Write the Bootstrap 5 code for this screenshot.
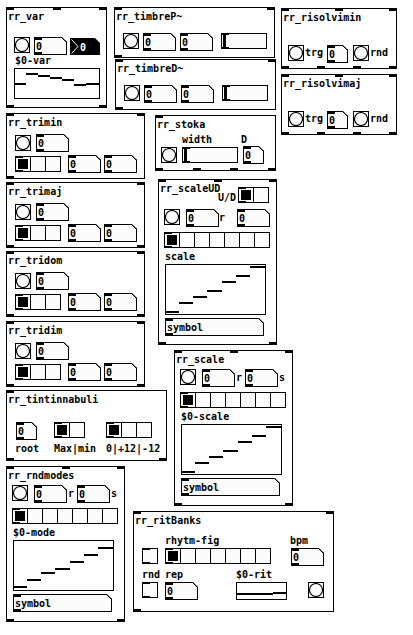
<!DOCTYPE html>
<html lang="en">
<head>
<meta charset="utf-8">
<meta name="viewport" content="width=device-width, initial-scale=1">
<title>rr_ patch</title>
<link href="https://cdn.jsdelivr.net/npm/bootstrap@5.3.0/dist/css/bootstrap.min.css" rel="stylesheet">
<style>
body, input, button { font: bold 10px/12px "DejaVu Sans Mono", monospace; color: #000; }
body { background: #fff; }

/* Modules on the free canvas */
.node { position: absolute; display: flex; flex-direction: column; border: 1px solid #000; background: #fff; }
.node h2 { font: inherit; margin: 0; padding: 1px 0 0 1px; white-space: nowrap; }
.ports { display: flex; justify-content: space-between; margin: -1px -1px 0; }
.ports.outs { margin: auto -1px -1px; }
.ports i { width: 8px; height: 3px; background: #000; }
#n-var { left: 6px; top: 7px; width: 101px; min-height: 101px; }
#n-tp { left: 114px; top: 7px; width: 161px; min-height: 51px; }
#n-td { left: 115px; top: 59px; width: 161px; min-height: 51px; }
#n-rmin { left: 281px; top: 8px; width: 116px; min-height: 61px; }
#n-rmaj { left: 281px; top: 74px; width: 116px; min-height: 61px; }
.tri { left: 6px; width: 139px; min-height: 66px; }
#n-tmin { top: 113px; }
#n-tmaj { top: 182px; }
#n-tdom { top: 251px; }
#n-tdim { top: 321px; }
#n-stoka { left: 155px; top: 115px; width: 121px; min-height: 56px; }
#n-ud { left: 158px; top: 179px; width: 119px; min-height: 166px; }
#n-scale { left: 174px; top: 350px; width: 119px; min-height: 156px; }
#n-tin { left: 6px; top: 390px; width: 161px; min-height: 71px; }
#n-rnd { left: 6px; top: 466px; width: 119px; min-height: 156px; }
#n-rit { left: 133px; top: 511px; width: 201px; min-height: 101px; }

/* Lines of controls */
.line { display: grid; align-items: start; justify-items: start; }
.cap { display: block; white-space: nowrap; line-height: 12px; }
.l-var { grid-template-columns: 20px 36px auto; padding: 14px 0 0 7px; }
.l-timbre { grid-template-columns: 20px 37px 41px auto; padding: 10px 0 0 8px; }
.l-ris { grid-template-columns: 17px 22px 26px 17px auto; padding: 21px 0 0 6px; }
.l-ris .cap { margin-top: 2px; }
.l-tri1 { grid-template-columns: 21px auto; padding: 5px 0 0 8px; align-items: center; }
.l-tri2 { grid-template-columns: 53px 36px auto; padding: 3px 0 0 8px; align-items: center; }
.l-stcap { grid-template-columns: 59px auto; padding: 3px 0 0 26px; }
.l-stoka { grid-template-columns: 21px 61px auto; padding-left: 5px; align-items: center; }
.l-udtop { grid-template-columns: 59px 20px auto; }
.l-udtop .cap { margin-top: 10px; }
.l-udtop .cells { margin-top: 5px; }
.l-ud { grid-template-columns: 22px 33px 18px auto; padding: 5px 0 0 5px; }
.l-scale { grid-template-columns: 22px 34px 9px 34px auto; padding: 3px 0 0 5px; }
.l-ud .cap, .l-scale .cap { margin-top: 3px; }
.l-tin { grid-template-columns: 38px 52px auto; padding: 16px 0 0 9px; }
.l-tincap { grid-template-columns: 39px 52px auto; padding: 3px 0 0 8px; }
.l-ritcap { grid-template-columns: 125px auto; padding: 8px 0 1px 31px; }
.l-rit { grid-template-columns: 23px 126px auto; padding-left: 8px; }
.l-rit2 { grid-template-columns: 23px 71px 72px auto; padding: 3px 0 0 8px; }
.l-rit2 .cap { margin-bottom: 1px; }
.l-rit2 .bang { margin-top: 13px; }
.stack { padding: 5px 0 0 5px; }
.stack .sub { padding: 3px 0 0 1px; }
.stack .plot { margin-bottom: 3px; }

/* Widgets */
.bang { display: block; width: 16px; height: 16px; padding: 0; border: 1px solid #000; background: #fcfcfc; }
.bang svg { display: block; }
.num { display: block; width: 33px; height: 18px; padding: 1px 0 0 1px; border: 1px solid #000; border-radius: 0; outline: 0;
  clip-path: polygon(0 0, calc(100% - 5px) 0, 100% 5px, 100% 100%, 0 100%);
  background:
    linear-gradient(#000, #000) 0 0 / 8px 3px no-repeat border-box,
    linear-gradient(#000, #000) 0 100% / 8px 3px no-repeat border-box,
    linear-gradient(to top right, transparent 42%, #000 42%) 100% 0 / 6px 6px no-repeat border-box,
    #fcfcfc; }
.num.short { width: 21px; }
.num.sym { width: 99px; }
.dark { position: relative; width: 30px; height: 17px; margin-top: 1px; }
.dark input { width: 100%; height: 100%; border: 0; outline: 0; padding: 2px 0 0 10px; background: #000; color: #fff; clip-path: polygon(0 0, calc(100% - 5px) 0, 100% 5px, 100% 100%, 0 100%); }
.dark svg { position: absolute; left: 0; top: 0; pointer-events: none; }
.cells { display: flex; border-right: 1px solid #000; position: relative; min-width: 0; }
.cells input, .tgl { appearance: none; display: block; margin: 0; width: 15px; height: 16px; border: 1px solid #000; border-right: 0; background: #fcfcfc; }
.cells input:checked { background: linear-gradient(#000, #000) 2px 2px / 10px 10px no-repeat #fcfcfc; }
.cells input:first-child, .tgl {
  background: linear-gradient(#000, #000) 0 0 / 8px 2px no-repeat border-box, linear-gradient(#000, #000) 0 100% / 8px 2px no-repeat border-box, #fcfcfc; }
.cells input:first-child:checked {
  background: linear-gradient(#000, #000) 0 0 / 8px 2px no-repeat border-box, linear-gradient(#000, #000) 0 100% / 8px 2px no-repeat border-box, linear-gradient(#000, #000) 2px 2px / 10px 10px no-repeat padding-box, #fcfcfc; }
.tgl { width: 16px; border-right: 1px solid #000; }
.slide { appearance: none; display: block; margin: 0; width: 46px; height: 16px; padding: 0 1px; border: 1px solid #000;
  background: linear-gradient(#000, #000) 0 0 / 8px 2px no-repeat border-box, linear-gradient(#000, #000) 0 100% / 8px 2px no-repeat border-box, #fcfcfc; }
.slide.wide { width: 56px; }
.slide::-webkit-slider-runnable-track { height: 14px; background: none; }
.slide::-webkit-slider-thumb { appearance: none; width: 3px; height: 14px; background: #000; border: 0; border-radius: 0; }
.plot { display: block; border: 1px solid #000; margin-top: 1px; fill: none; stroke: #000; stroke-width: 2px; }
.l-rit2 .plot { margin-top: 0; }
</style>
<script src="https://cdn.jsdelivr.net/npm/bootstrap@5.3.0/dist/js/bootstrap.bundle.min.js"></script>
</head>
<body>
<svg class="d-none" aria-hidden="true"><symbol id="ring" viewBox="0 0 14 14"><circle cx="7" cy="7" r="6.5" fill="none" stroke="#000" stroke-width="1.1"/></symbol></svg>
<main class="position-relative min-vh-100 overflow-hidden">

<section class="node" id="n-var">
  <div class="ports"><i></i><i></i><i></i></div>
  <h2>rr_var</h2>
  <div class="line l-var">
    <button class="bang" aria-label="bang"><svg width="14" height="14"><use href="#ring"/></svg></button>
    <input class="num" aria-label="value" value="0">
    <div class="dark"><input aria-label="output" value="0"><svg width="10" height="17" fill="none" stroke="#fff"><path d="M1.5 1.5L8 8.5L1.5 15.5"/></svg></div>
  </div>
  <span class="cap ps-2">$0-var</span>
  <svg class="plot ms-2" style="margin-left:7px!important" width="86" height="31" viewBox="1 1 84 29"><path d="M0 16H12M12 6H24M24 8H36M36 10H48M48 12H60M60 17H72M72 16H86"/></svg>
  <div class="ports outs"><i></i><i></i></div>
</section>

<section class="node" id="n-tp">
  <div class="ports"><i></i><i></i></div>
  <h2>rr_timbreP~</h2>
  <div class="line l-timbre">
    <button class="bang" aria-label="bang"><svg width="14" height="14"><use href="#ring"/></svg></button>
    <input class="num" aria-label="first" value="0">
    <input class="num" aria-label="second" value="0">
    <input class="slide" type="range" aria-label="level" value="0">
  </div>
  <div class="ports outs"><i></i></div>
</section>

<section class="node" id="n-td">
  <div class="ports"><i></i><i></i></div>
  <h2>rr_timbreD~</h2>
  <div class="line l-timbre">
    <button class="bang" aria-label="bang"><svg width="14" height="14"><use href="#ring"/></svg></button>
    <input class="num" aria-label="first" value="0">
    <input class="num" aria-label="second" value="0">
    <input class="slide" type="range" aria-label="level" value="0">
  </div>
  <div class="ports outs"><i></i></div>
</section>

<section class="node" id="n-rmin">
  <div class="ports"><i></i><i></i><i></i></div>
  <h2>rr_risolvimin</h2>
  <div class="line l-ris">
    <button class="bang" id="b1" aria-label="trg"><svg width="14" height="14"><use href="#ring"/></svg></button><label class="cap" for="b1">trg</label>
    <input class="num short" aria-label="value" value="0">
    <button class="bang" id="b2" aria-label="rnd"><svg width="14" height="14"><use href="#ring"/></svg></button><label class="cap" for="b2">rnd</label>
  </div>
  <div class="ports outs"><i></i><i></i><i></i><i></i></div>
</section>

<section class="node" id="n-rmaj">
  <div class="ports"><i></i><i></i><i></i></div>
  <h2>rr_risolvimaj</h2>
  <div class="line l-ris">
    <button class="bang" id="b3" aria-label="trg"><svg width="14" height="14"><use href="#ring"/></svg></button><label class="cap" for="b3">trg</label>
    <input class="num short" aria-label="value" value="0">
    <button class="bang" id="b4" aria-label="rnd"><svg width="14" height="14"><use href="#ring"/></svg></button><label class="cap" for="b4">rnd</label>
  </div>
  <div class="ports outs"><i></i><i></i><i></i><i></i></div>
</section>

<section class="node tri" id="n-tmin">
  <div class="ports"><i></i><i></i></div>
  <h2>rr_trimin</h2>
  <div class="line l-tri1">
    <button class="bang" aria-label="bang"><svg width="14" height="14"><use href="#ring"/></svg></button>
    <input class="num" aria-label="value" value="0">
  </div>
  <div class="line l-tri2">
    <div class="cells" role="radiogroup" aria-label="inversion"><input type="radio" name="r1" aria-label="0" checked><input type="radio" name="r1" aria-label="1"><input type="radio" name="r1" aria-label="2"></div>
    <input class="num" aria-label="first" value="0">
    <input class="num" aria-label="second" value="0">
  </div>
  <div class="ports outs"><i></i></div>
</section>

<section class="node tri" id="n-tmaj">
  <div class="ports"><i></i><i></i></div>
  <h2>rr_trimaj</h2>
  <div class="line l-tri1">
    <button class="bang" aria-label="bang"><svg width="14" height="14"><use href="#ring"/></svg></button>
    <input class="num" aria-label="value" value="0">
  </div>
  <div class="line l-tri2">
    <div class="cells" role="radiogroup" aria-label="inversion"><input type="radio" name="r2" aria-label="0" checked><input type="radio" name="r2" aria-label="1"><input type="radio" name="r2" aria-label="2"></div>
    <input class="num" aria-label="first" value="0">
    <input class="num" aria-label="second" value="0">
  </div>
  <div class="ports outs"><i></i><i></i></div>
</section>

<section class="node tri" id="n-tdom">
  <div class="ports"><i></i><i></i></div>
  <h2>rr_tridom</h2>
  <div class="line l-tri1">
    <button class="bang" aria-label="bang"><svg width="14" height="14"><use href="#ring"/></svg></button>
    <input class="num" aria-label="value" value="0">
  </div>
  <div class="line l-tri2">
    <div class="cells" role="radiogroup" aria-label="inversion"><input type="radio" name="r3" aria-label="0" checked><input type="radio" name="r3" aria-label="1"><input type="radio" name="r3" aria-label="2"></div>
    <input class="num" aria-label="first" value="0">
    <input class="num" aria-label="second" value="0">
  </div>
  <div class="ports outs"><i></i><i></i></div>
</section>

<section class="node tri" id="n-tdim">
  <div class="ports"><i></i><i></i></div>
  <h2>rr_tridim</h2>
  <div class="line l-tri1">
    <button class="bang" aria-label="bang"><svg width="14" height="14"><use href="#ring"/></svg></button>
    <input class="num" aria-label="value" value="0">
  </div>
  <div class="line l-tri2">
    <div class="cells" role="radiogroup" aria-label="inversion"><input type="radio" name="r4" aria-label="0" checked><input type="radio" name="r4" aria-label="1"><input type="radio" name="r4" aria-label="2"></div>
    <input class="num" aria-label="first" value="0">
    <input class="num" aria-label="second" value="0">
  </div>
  <div class="ports outs"><i></i><i></i></div>
</section>

<section class="node" id="n-stoka">
  <div class="ports"><i></i></div>
  <h2>rr_stoka</h2>
  <div class="line l-stcap"><label class="cap" for="sw">width</label><label class="cap" for="sd">D</label></div>
  <div class="line l-stoka">
    <button class="bang" aria-label="bang"><svg width="14" height="14"><use href="#ring"/></svg></button>
    <input class="slide wide" type="range" id="sw" value="0">
    <input class="num short" id="sd" value="0">
  </div>
  <div class="ports outs"><i></i><i></i><i></i><i></i></div>
</section>

<section class="node" id="n-ud">
  <div class="ports"><i></i><i></i><i></i></div>
  <div class="line l-udtop">
    <h2>rr_scaleUD</h2><span class="cap" id="udl">U/D</span>
    <div class="cells" role="radiogroup" aria-labelledby="udl"><input type="radio" name="r5" aria-label="U" checked><input type="radio" name="r5" aria-label="D"></div>
  </div>
  <div class="line l-ud">
    <button class="bang" aria-label="bang"><svg width="14" height="14"><use href="#ring"/></svg></button>
    <input class="num" id="ur" value="0"><label class="cap" for="ur">r</label>
    <input class="num" aria-label="value" value="0">
  </div>
  <div class="stack">
    <div class="d-flex"><div class="cells" role="radiogroup" aria-label="scale"><input type="radio" name="r6" aria-label="0" checked><input type="radio" name="r6" aria-label="1"><input type="radio" name="r6" aria-label="2"><input type="radio" name="r6" aria-label="3"><input type="radio" name="r6" aria-label="4"><input type="radio" name="r6" aria-label="5"><input type="radio" name="r6" aria-label="6"></div></div>
    <div class="sub">
      <label class="cap" for="us">scale</label>
      <svg class="plot" width="101" height="51" viewBox="1 1 99 49"><path d="M0 48H14M14 39H28M28 33H42M42 27H57M57 18H71M71 12H85M85 3H101"/></svg>
      <input class="num sym" id="us" value="symbol">
    </div>
  </div>
  <div class="ports outs"><i></i><i></i></div>
</section>

<section class="node" id="n-scale">
  <div class="ports"><i></i><i></i><i></i></div>
  <h2>rr_scale</h2>
  <div class="line l-scale">
    <button class="bang" aria-label="bang"><svg width="14" height="14"><use href="#ring"/></svg></button>
    <input class="num" id="cr" value="0"><label class="cap" for="cr">r</label>
    <input class="num" id="cs" value="0"><label class="cap" for="cs">s</label>
  </div>
  <div class="stack">
    <div class="d-flex"><div class="cells" role="radiogroup" aria-label="scale"><input type="radio" name="r7" aria-label="0" checked><input type="radio" name="r7" aria-label="1"><input type="radio" name="r7" aria-label="2"><input type="radio" name="r7" aria-label="3"><input type="radio" name="r7" aria-label="4"><input type="radio" name="r7" aria-label="5"><input type="radio" name="r7" aria-label="6"></div></div>
    <div class="sub">
      <label class="cap" for="cy">$0-scale</label>
      <svg class="plot" width="101" height="51" viewBox="1 1 99 49"><path d="M0 48H14M14 39H28M28 33H42M42 27H57M57 18H71M71 12H85M85 3H101"/></svg>
      <input class="num sym" id="cy" value="symbol">
    </div>
  </div>
  <div class="ports outs"><i></i><i></i></div>
</section>

<section class="node" id="n-tin">
  <div class="ports"><i></i></div>
  <h2>rr_tintinnabuli</h2>
  <div class="line l-tin">
    <input class="num short" id="tr" value="0">
    <div class="cells" role="radiogroup" aria-labelledby="tm"><input type="radio" name="r8" aria-label="Max" checked><input type="radio" name="r8" aria-label="min"></div>
    <div class="cells" role="radiogroup" aria-labelledby="to"><input type="radio" name="r9" aria-label="0" checked><input type="radio" name="r9" aria-label="+12"><input type="radio" name="r9" aria-label="-12"></div>
  </div>
  <div class="line l-tincap"><label class="cap" for="tr">root</label><span class="cap" id="tm">Max|min</span><span class="cap" id="to">0|+12|-12</span></div>
  <div class="ports outs"><i></i><i></i></div>
</section>

<section class="node" id="n-rnd">
  <div class="ports"><i></i><i></i><i></i></div>
  <h2>rr_rndmodes</h2>
  <div class="line l-scale">
    <button class="bang" aria-label="bang"><svg width="14" height="14"><use href="#ring"/></svg></button>
    <input class="num" id="mr" value="0"><label class="cap" for="mr">r</label>
    <input class="num" id="ms" value="0"><label class="cap" for="ms">s</label>
  </div>
  <div class="stack">
    <div class="d-flex"><div class="cells" role="radiogroup" aria-label="mode"><input type="radio" name="r10" aria-label="0" checked><input type="radio" name="r10" aria-label="1"><input type="radio" name="r10" aria-label="2"><input type="radio" name="r10" aria-label="3"><input type="radio" name="r10" aria-label="4"><input type="radio" name="r10" aria-label="5"><input type="radio" name="r10" aria-label="6"></div></div>
    <div class="sub">
      <label class="cap" for="my">$0-mode</label>
      <svg class="plot" width="101" height="51" viewBox="1 1 99 49"><path d="M0 47H14M14 40H28M28 33H42M42 29H57M57 22H71M71 15H85M85 8H101"/></svg>
      <input class="num sym" id="my" value="symbol">
    </div>
  </div>
  <div class="ports outs"><i></i><i></i></div>
</section>

<section class="node" id="n-rit">
  <div class="ports"><i></i><i></i></div>
  <h2>rr_ritBanks</h2>
  <div class="line l-ritcap"><span class="cap" id="rf">rhytm-fig</span><label class="cap" for="bp">bpm</label></div>
  <div class="line l-rit">
    <input class="tgl" type="checkbox" aria-label="on">
    <div class="cells" role="radiogroup" aria-labelledby="rf"><input type="radio" name="r11" aria-label="0" checked><input type="radio" name="r11" aria-label="1"><input type="radio" name="r11" aria-label="2"><input type="radio" name="r11" aria-label="3"><input type="radio" name="r11" aria-label="4"><input type="radio" name="r11" aria-label="5"><input type="radio" name="r11" aria-label="6"></div>
    <input class="num" id="bp" value="0">
  </div>
  <div class="line l-rit2">
    <div><label class="cap" for="rn">rnd</label><input class="tgl" type="checkbox" id="rn"></div>
    <div><label class="cap" for="rp">rep</label><input class="num" id="rp" value="0"></div>
    <div><span class="cap">$0-rit</span><svg class="plot" width="51" height="18" viewBox="1 1 49 16"><path d="M0 12H37M37 11H51"/></svg></div>
    <button class="bang" aria-label="bang"><svg width="14" height="14"><use href="#ring"/></svg></button>
  </div>
  <div class="ports outs"><i></i></div>
</section>

</main>
</body>
</html>
